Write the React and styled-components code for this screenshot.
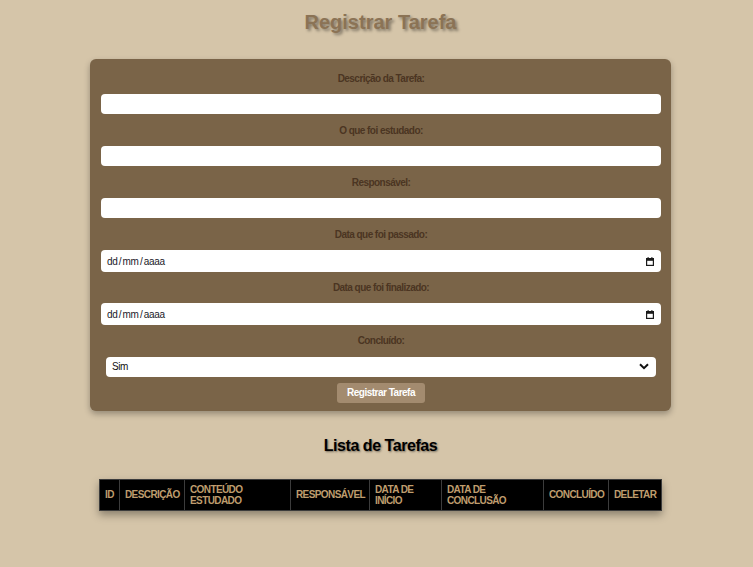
import styled, { createGlobalStyle } from 'styled-components'

const GlobalStyle = createGlobalStyle`
  body {
    margin: 0;
    background: #d5c5a9;
    font-family: 'Liberation Sans', Arial, sans-serif;
  }
`

const fields = [
  { label: 'Descrição da Tarefa:', type: 'text' },
  { label: 'O que foi estudado:', type: 'text' },
  { label: 'Responsável:', type: 'text' },
  { label: 'Data que foi passado:', type: 'date' },
  { label: 'Data que foi finalizado:', type: 'date' },
]

const columns = [
  { title: 'ID', width: 20 },
  { title: 'Descrição', width: 65 },
  { title: 'Conteúdo Estudado', width: 106 },
  { title: 'Responsável', width: 79 },
  { title: 'Data de Início', width: 72 },
  { title: 'Data de Conclusão', width: 102 },
  { title: 'Concluído', width: 65 },
  { title: 'Deletar', width: 53 },
]

const CalendarIcon = () => (
  <svg width="8" height="9" viewBox="0 0 8 9">
    <rect x="0.6" y="1.6" width="6.8" height="6.8" fill="none" stroke="#1a1a1a" strokeWidth="1.2" />
    <rect x="0.6" y="1.6" width="6.8" height="2.2" fill="#1a1a1a" />
    <rect x="1.6" y="0" width="1" height="2" fill="#1a1a1a" />
    <rect x="5.4" y="0" width="1" height="2" fill="#1a1a1a" />
  </svg>
)

const App = () => {
  return (
    <Page>
      <GlobalStyle />
      <Title>Registrar Tarefa</Title>
      <Form onSubmit={(e) => e.preventDefault()}>
        {fields.map((f) => (
          <Field key={f.label} $gap={f.type === 'date' ? 10 : 11}>
            <Label>{f.label}</Label>
            {f.type === 'date' ? (
              <DateBox>
                <DateText>dd / mm / aaaa</DateText>
                <CalendarIcon />
              </DateBox>
            ) : (
              <TextInput type="text" />
            )}
          </Field>
        ))}
        <Field $gap={6}>
          <Label>Concluído:</Label>
          <SelectWrap>
            <Select defaultValue="sim">
              <option value="sim">Sim</option>
              <option value="nao">Não</option>
            </Select>
            <Chevron width="10" height="7" viewBox="0 0 10 7">
              <path d="M1 1.2 L5 5.2 L9 1.2" fill="none" stroke="#111" strokeWidth="2" />
            </Chevron>
          </SelectWrap>
        </Field>
        <SubmitButton type="submit">Registrar Tarefa</SubmitButton>
      </Form>

      <ListTitle>Lista de Tarefas</ListTitle>
      <Table>
        <colgroup>
          {columns.map((c) => (
            <col key={c.title} style={{ width: c.width }} />
          ))}
        </colgroup>
        <thead>
          <tr>
            {columns.map((c) => (
              <Th key={c.title}>{c.title}</Th>
            ))}
          </tr>
        </thead>
        <tbody />
      </Table>
    </Page>
  )
}

const Page = styled.div`
  padding: 10px 0 40px 8px;
  display: flex;
  flex-direction: column;
  align-items: center;
`

const Title = styled.h1`
  margin: 0 0 25px;
  font-size: 20px;
  line-height: 24px;
  font-weight: bold;
  color: #8b7355;
  text-shadow: 2px 2px 3px rgba(0, 0, 0, 0.4);
`

const Form = styled.form`
  width: 581px;
  box-sizing: border-box;
  background: #7a6448;
  border-radius: 6px;
  padding: 14px 10px 8px 11px;
  box-shadow: 0 3px 6px rgba(0, 0, 0, 0.3);
  display: flex;
  flex-direction: column;
  align-items: center;
`

const Field = styled.div`
  width: 100%;
  display: flex;
  flex-direction: column;
  align-items: center;
  margin-bottom: ${(p) => p.$gap}px;
`

const Label = styled.label`
  font-size: 10px;
  line-height: 12px;
  font-weight: bold;
  letter-spacing: -0.55px;
  color: #4b3522;
  margin-bottom: 9px;
`

const TextInput = styled.input`
  width: 100%;
  height: 20px;
  box-sizing: border-box;
  border: none;
  border-radius: 4px;
  background: #fff;
  padding: 0 6px;
  outline: none;
`

const DateBox = styled.div`
  width: 100%;
  height: 22px;
  box-sizing: border-box;
  background: #fff;
  border-radius: 4px;
  padding: 0 7px 0 6px;
  display: flex;
  align-items: center;
  justify-content: space-between;
`

const DateText = styled.span`
  font-size: 10px;
  color: #1a1a2a;
  letter-spacing: -0.3px;
  word-spacing: -1.2px;
`

const SelectWrap = styled.div`
  position: relative;
  width: 550px;
`

const Select = styled.select`
  width: 100%;
  height: 20px;
  box-sizing: border-box;
  appearance: none;
  border: none;
  border-radius: 4px;
  background: #fff;
  padding: 0 6px;
  font-family: inherit;
  font-size: 10px;
  letter-spacing: -0.4px;
  color: #111;
  outline: none;
`

const Chevron = styled.svg`
  position: absolute;
  right: 7px;
  top: 7px;
  pointer-events: none;
`

const SubmitButton = styled.button`
  width: 88px;
  height: 20px;
  padding: 0;
  border: none;
  border-radius: 3px;
  background: #a38b6f;
  color: #fff;
  font-family: inherit;
  font-size: 10px;
  font-weight: bold;
  letter-spacing: -0.5px;
  cursor: pointer;
`

const ListTitle = styled.h2`
  margin: 26px 0 24px;
  font-size: 16px;
  line-height: 18px;
  font-weight: bold;
  letter-spacing: -0.45px;
  color: #000;
  text-shadow: 1px 1px 2px rgba(0, 0, 0, 0.45);
`

const Table = styled.table`
  width: 562px;
  table-layout: fixed;
  border-collapse: collapse;
  background: #000;
  box-shadow: 0 4px 8px rgba(0, 0, 0, 0.35);
`

const Th = styled.th`
  border: 1px solid #3c3c3c;
  padding: 4px 5px;
  height: 22px;
  text-align: left;
  font-size: 10px;
  line-height: 11px;
  font-weight: bold;
  text-transform: uppercase;
  letter-spacing: -0.6px;
  color: #bf9d6e;
`

export default App
